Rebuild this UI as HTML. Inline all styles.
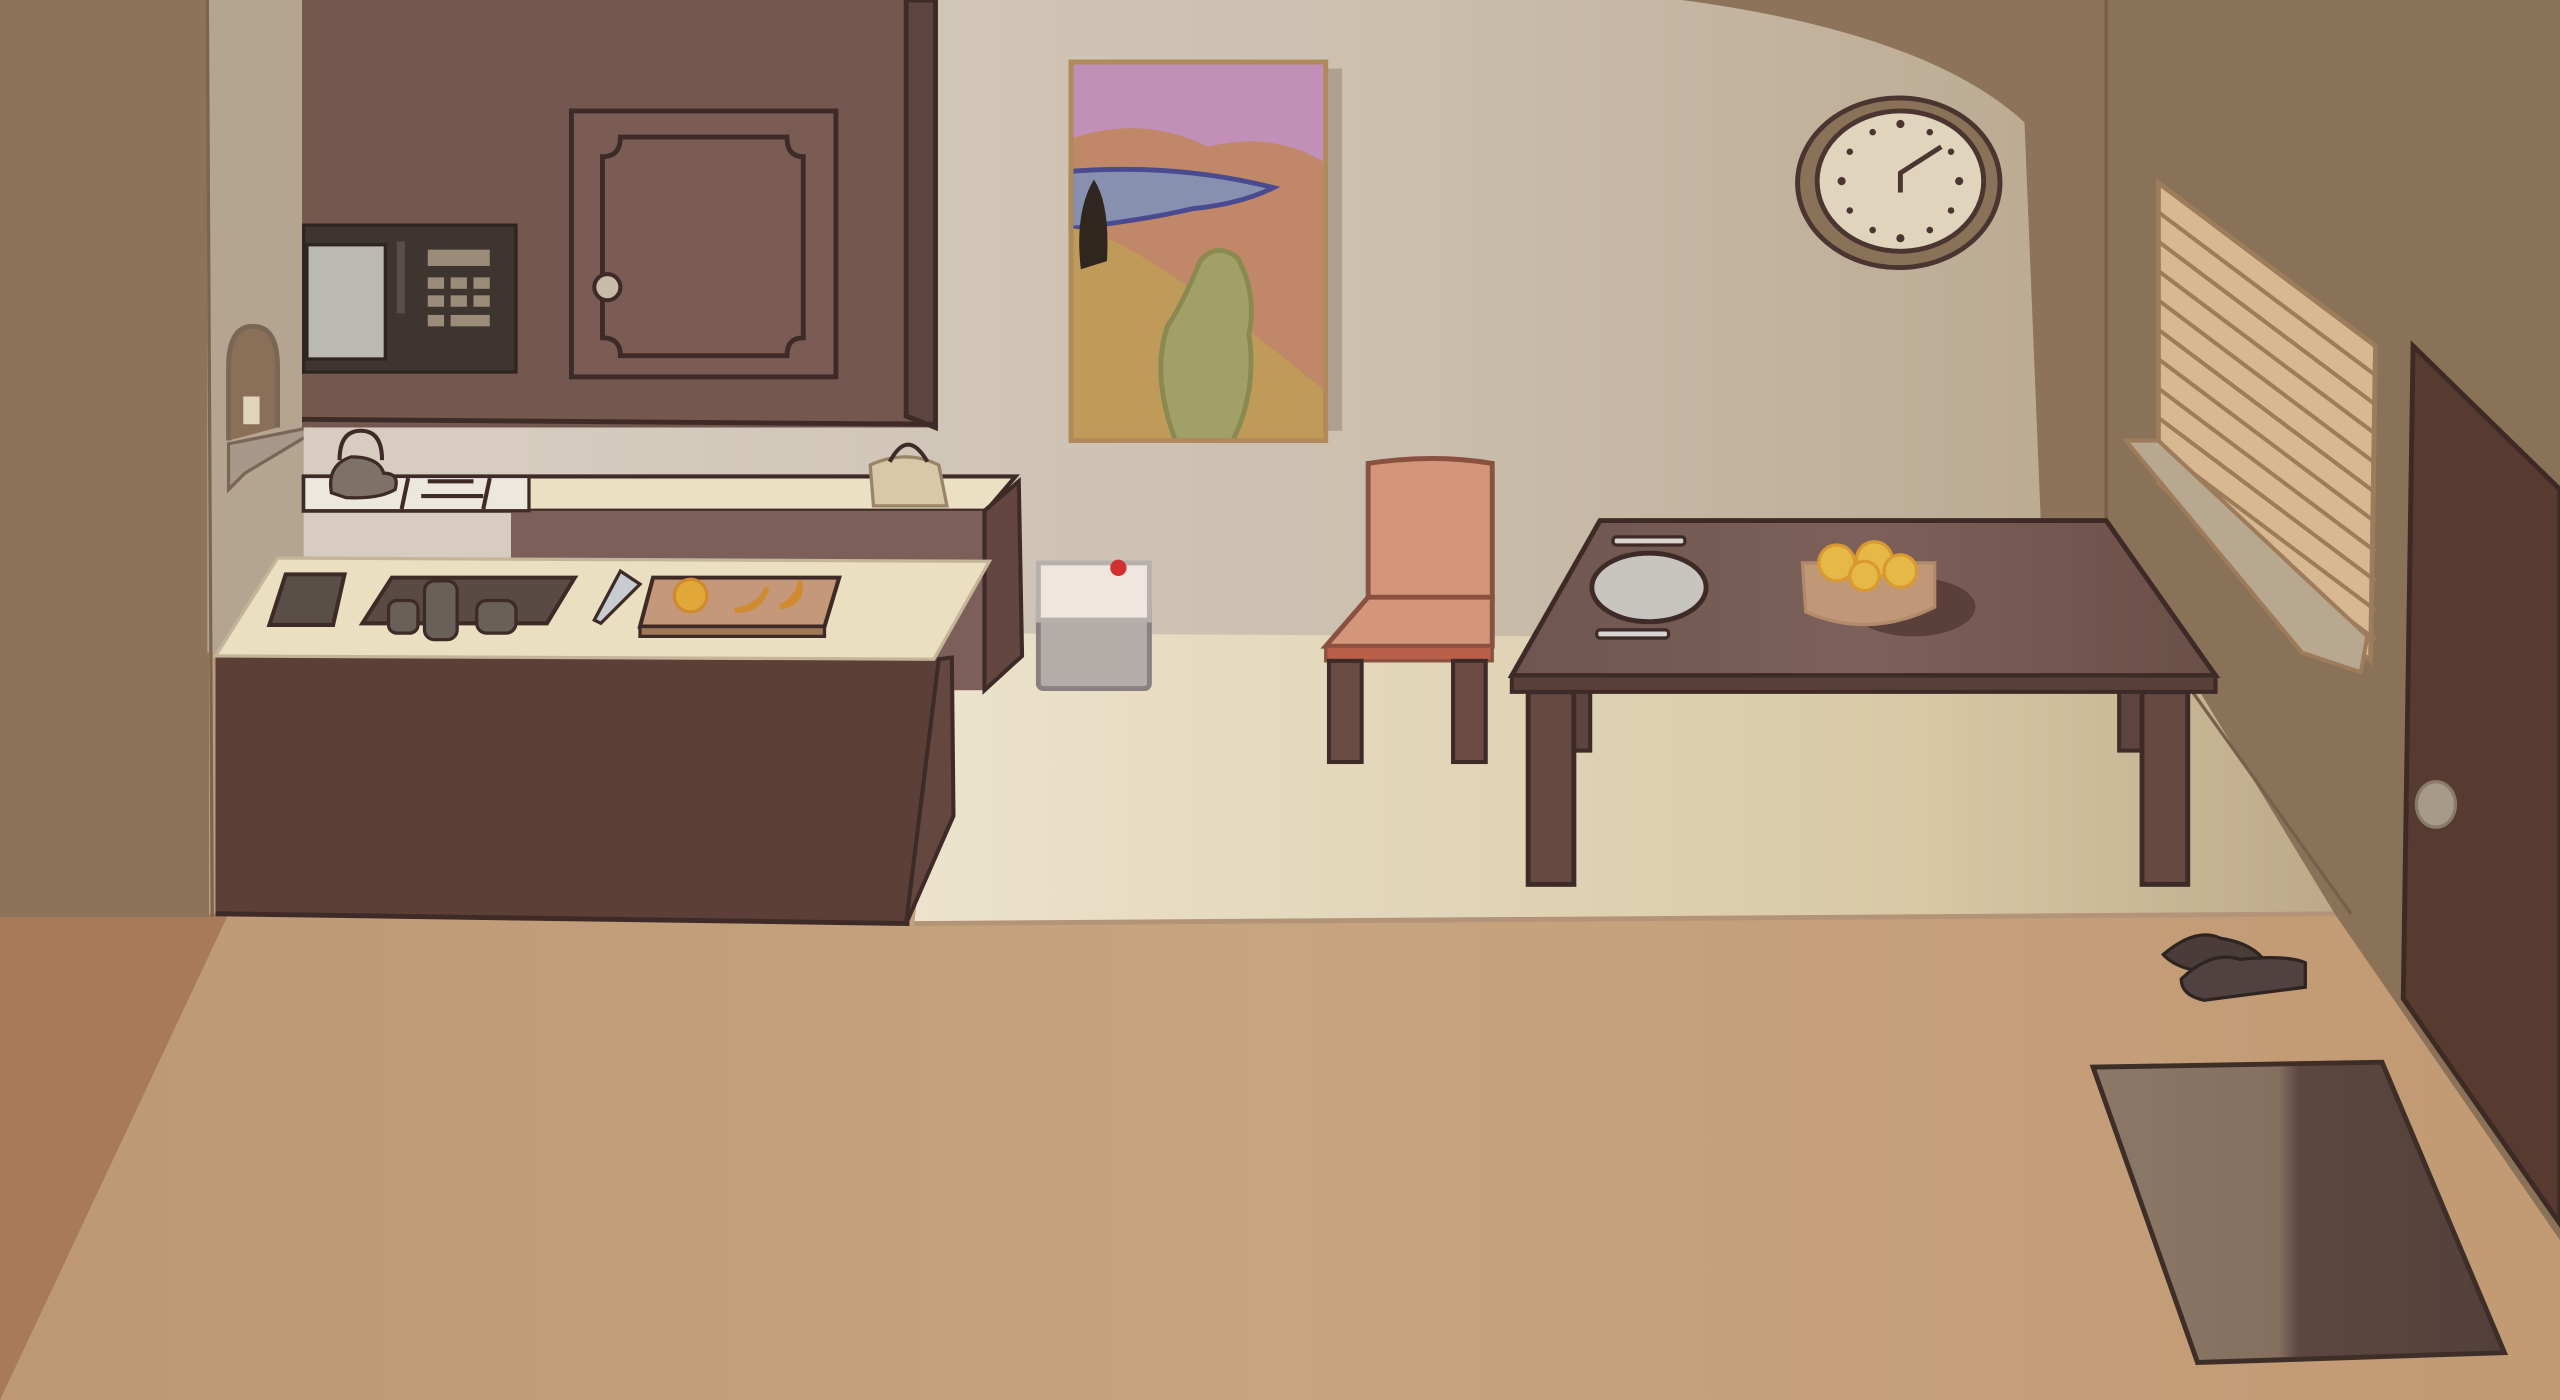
<!DOCTYPE html>
<html><head><meta charset="utf-8"><style>
html,body{margin:0;padding:0;width:2560px;height:1400px;overflow:hidden;background:#c4a07c}
svg{display:block}
</style></head><body>
<svg width="2560" height="1400" viewBox="0 0 1568 858" preserveAspectRatio="none" xmlns="http://www.w3.org/2000/svg">
<defs>
<linearGradient id="bw" x1="0" y1="0" x2="1" y2="0"><stop offset="0" stop-color="#d8cfc3"/><stop offset="0.6" stop-color="#cbbfae"/><stop offset="1" stop-color="#bba990"/></linearGradient>
<linearGradient id="fl" x1="0" y1="0" x2="1" y2="0"><stop offset="0" stop-color="#bc9873"/><stop offset="0.5" stop-color="#c7a57f"/><stop offset="1" stop-color="#c29a74"/></linearGradient>
<linearGradient id="bf" x1="0" y1="0" x2="1" y2="0"><stop offset="0" stop-color="#ece3cc"/><stop offset="0.7" stop-color="#d8c8a6"/><stop offset="1" stop-color="#bca888"/></linearGradient>
<linearGradient id="tb" x1="0" y1="0" x2="1" y2="0"><stop offset="0" stop-color="#6f5650"/><stop offset="0.5" stop-color="#7d605a"/><stop offset="1" stop-color="#6a4f47"/></linearGradient>
<linearGradient id="mat" x1="0" y1="0" x2="1" y2="0"><stop offset="0" stop-color="#8c7868"/><stop offset="0.45" stop-color="#857060"/><stop offset="0.5" stop-color="#5c4640"/><stop offset="1" stop-color="#54403a"/></linearGradient>
</defs>
<rect x="0" y="0" width="1568" height="858" fill="url(#fl)"/>
<polygon points="0,560 140,560 0,858" fill="#a87a58"/>
<polygon points="1430,560 1568,560 1568,760" fill="#9c7050"/>
<rect x="185" y="0" width="1110" height="392" fill="url(#bw)"/>
<path d="M1030,0 Q1180,20 1240,75 L1250,320 L1295,320 L1295,0 Z" fill="#8c7359"/>
<polygon points="580,388 1300,392 1345,420 1440,560 560,566" fill="url(#bf)"/>
<line x1="560" y1="566" x2="1440" y2="560" stroke="#b49478" stroke-width="3"/>
<rect x="0" y="0" width="128" height="562" fill="#8c735a"/>
<rect x="127" y="0" width="60" height="400" fill="#b4a490"/>
<line x1="127" y1="0" x2="130" y2="562" stroke="#7a6650" stroke-width="2"/>
<polygon points="1290,0 1568,0 1568,760 1430,560 1345,420 1290,392" fill="#8a7258"/>
<line x1="1290" y1="0" x2="1290" y2="392" stroke="#76604a" stroke-width="2"/>
<line x1="1340" y1="420" x2="1440" y2="560" stroke="#76604a" stroke-width="2"/>
<polygon points="1478,212 1568,300 1568,750 1472,612" fill="#573a30" stroke="#3e2a24" stroke-width="3"/>
<ellipse cx="1492" cy="493" rx="12" ry="14" fill="#a89a88" stroke="#8a7a68" stroke-width="2"/>
<polygon points="1322,112 1455,212 1452,405 1322,296" fill="#d8b890" stroke="#9c7c5a" stroke-width="3"/>
<g stroke="#9c7c5a" stroke-width="2.5">
<line x1="1322" y1="130" x2="1455" y2="230"/><line x1="1322" y1="148" x2="1455" y2="248"/><line x1="1322" y1="166" x2="1455" y2="266"/><line x1="1322" y1="184" x2="1455" y2="284"/><line x1="1322" y1="202" x2="1455" y2="302"/><line x1="1322" y1="220" x2="1455" y2="320"/><line x1="1322" y1="238" x2="1455" y2="338"/><line x1="1322" y1="256" x2="1455" y2="356"/><line x1="1322" y1="274" x2="1455" y2="374"/><line x1="1322" y1="292" x2="1455" y2="392"/>
</g>
<polygon points="1302,270 1322,270 1450,390 1446,412 1410,400" fill="#b8a890" stroke="#9c7c5a" stroke-width="2.5"/>
<ellipse cx="1163" cy="112" rx="62" ry="52" fill="#8a7258" stroke="#4a3530" stroke-width="3"/>
<ellipse cx="1164" cy="111" rx="51" ry="43" fill="#e0d4bc" stroke="#4a3530" stroke-width="3"/>
<g fill="#4a3530"><circle cx="1164" cy="76" r="2.5"/><circle cx="1164" cy="146" r="2.5"/><circle cx="1200" cy="111" r="2.5"/><circle cx="1128" cy="111" r="2.5"/><circle cx="1147" cy="81" r="2"/><circle cx="1182" cy="81" r="2"/><circle cx="1195" cy="93" r="2"/><circle cx="1195" cy="129" r="2"/><circle cx="1182" cy="141" r="2"/><circle cx="1147" cy="141" r="2"/><circle cx="1133" cy="129" r="2"/><circle cx="1133" cy="93" r="2"/></g>
<path d="M1164,118 L1164,106 L1189,90" fill="none" stroke="#4a3530" stroke-width="3"/>
<rect x="812" y="42" width="10" height="222" fill="#b0a090"/>
<rect x="656" y="38" width="156" height="232" fill="#b88d9c"/>
<path d="M656,38 H812 V100 Q780,80 740,90 Q700,70 656,85Z" fill="#c090b8"/>
<path d="M656,85 Q700,70 740,90 Q780,80 812,100 V270 H656Z" fill="#c08868"/>
<path d="M656,105 Q720,100 780,115 Q760,125 730,128 Q700,135 656,140Z" fill="#8890b0" stroke="#4a4a90" stroke-width="3"/>
<path d="M656,140 Q690,140 812,240 V270 H656Z" fill="#c09a58"/>
<path d="M720,270 Q705,230 715,200 Q725,185 735,160 Q745,148 758,158 Q770,180 765,205 Q770,240 755,270Z" fill="#a0a068" stroke="#8a8a50" stroke-width="3"/>
<path d="M662,165 Q658,130 670,110 Q680,125 678,160Z" fill="#302620"/>
<rect x="656" y="38" width="156" height="232" fill="none" stroke="#b08a5a" stroke-width="3"/>
<rect x="185" y="0" width="388" height="262" fill="#74574f"/>
<polygon points="555,0 573,0 573,262 555,255" fill="#5e4440" stroke="#3e2a26" stroke-width="3"/>
<line x1="185" y1="257" x2="573" y2="260" stroke="#3e2a26" stroke-width="3"/>
<rect x="350" y="68" width="162" height="163" fill="#7a5c55" stroke="#3e2a26" stroke-width="3"/>
<path d="M380,84 H482 Q482,96 492,96 V207 Q482,207 482,218 H380 Q380,207 369,207 V96 Q380,96 380,84Z" fill="none" stroke="#3e2a26" stroke-width="3"/>
<circle cx="372" cy="176" r="8" fill="#c8bca8" stroke="#3e2a26" stroke-width="2.5"/>
<rect x="186" y="138" width="130" height="90" fill="#3e3530" stroke="#2e2420" stroke-width="2"/>
<rect x="188" y="150" width="48" height="70" fill="#bcb8b4" stroke="#2e2420" stroke-width="2"/>
<rect x="262" y="153" width="38" height="10" fill="#9a8c78"/>
<g fill="#9a8c78"><rect x="262" y="170" width="10" height="7"/><rect x="276" y="170" width="10" height="7"/><rect x="290" y="170" width="10" height="7"/><rect x="262" y="181" width="10" height="7"/><rect x="276" y="181" width="10" height="7"/><rect x="290" y="181" width="10" height="7"/><rect x="262" y="193" width="10" height="7"/><rect x="276" y="193" width="24" height="7"/></g>
<rect x="243" y="148" width="5" height="44" fill="#5a4e48"/>
<path d="M140,270 V225 Q140,200 155,200 Q170,200 170,225 V262" fill="#8a7058" stroke="#7a6655" stroke-width="3"/>
<polygon points="140,272 190,262 190,266 150,290 140,300" fill="#a8988a" stroke="#7a6655" stroke-width="2"/>
<rect x="149" y="243" width="10" height="17" fill="#e0d4bc"/>
<rect x="186" y="262" width="138" height="80" fill="#d8ccc0"/>
<polygon points="186,292 622,292 604,313 186,313" fill="#ece0c4" stroke="#3e2a26" stroke-width="2.5"/>
<rect x="313" y="313" width="290" height="110" fill="#7c5f58"/>
<polygon points="603,313 624,295 626,402 603,423" fill="#62463f" stroke="#3e2a26" stroke-width="2.5"/>
<rect x="186" y="292" width="138" height="21" fill="#ece8e0" stroke="#3e2a26" stroke-width="2"/>
<path d="M250,293 L246,312 M262,295 H290 M258,304 H296 M300,293 L296,312" stroke="#3e2a26" stroke-width="2.5" fill="none"/>
<path d="M203,302 Q200,285 215,280 Q232,280 235,290 Q245,290 242,300 Q232,306 212,305Z" fill="#7e7268" stroke="#3e2a26" stroke-width="2"/>
<path d="M208,282 Q208,264 221,264 Q234,264 234,282" fill="none" stroke="#3e2a26" stroke-width="2.5"/>
<path d="M533,285 Q555,275 575,285 L580,310 H535Z" fill="#d8c8a8" stroke="#9a8468" stroke-width="2"/>
<path d="M545,283 Q556,262 568,283" fill="none" stroke="#3e2a26" stroke-width="2.5"/>
<polygon points="132,400 575,404 555,566 132,560" fill="#5c3f36"/>
<polygon points="575,404 583,403 584,500 555,566" fill="#644840" stroke="#3e2a26" stroke-width="2.5"/>
<line x1="132" y1="560" x2="557" y2="566" stroke="#3e2a26" stroke-width="3"/>
<polygon points="170,342 606,344 572,404 132,402" fill="#ebdfc2" stroke="#c4b49a" stroke-width="2"/>
<polygon points="175,352 211,352 204,383 165,383" fill="#5a4e48" stroke="#3e2a26" stroke-width="2.5"/>
<polygon points="240,354 352,354 335,382 222,382" fill="#5a4a44" stroke="#3e2a26" stroke-width="2.5"/>
<rect x="238" y="368" width="18" height="20" rx="5" fill="#6a605a" stroke="#3e2a26" stroke-width="2"/>
<rect x="292" y="368" width="24" height="20" rx="6" fill="#6a605a" stroke="#3e2a26" stroke-width="2"/>
<rect x="260" y="356" width="20" height="36" rx="6" fill="#6a605a" stroke="#3e2a26" stroke-width="2"/>
<path d="M380,350 L392,358 L368,382 L364,380Z" fill="#c8ccd0" stroke="#3e2a26" stroke-width="2"/>
<polygon points="400,354 514,354 505,384 392,384" fill="#c49878" stroke="#3e2a26" stroke-width="2.5"/>
<rect x="392" y="384" width="113" height="6" fill="#a07858" stroke="#3e2a26" stroke-width="2"/>
<circle cx="423" cy="365" r="10" fill="#e0a838" stroke="#d08a30" stroke-width="2"/>
<path d="M450,374 Q465,372 470,360 Q465,375 450,374Z M478,372 Q490,365 490,356 Q492,370 478,372Z" fill="#e0a838" stroke="#d08a30" stroke-width="3"/>
<rect x="636" y="368" width="68" height="54" rx="3" fill="#b4aca8" stroke="#8a8080" stroke-width="3"/>
<path d="M636,345 H704 V380 H636Z" fill="#f0e6e0" stroke="#b8b0ac" stroke-width="3"/>
<circle cx="685" cy="348" r="5" fill="#d03030"/>
<path d="M838,284 Q878,278 914,284 V368 H838Z" fill="#d4967a" stroke="#8a5040" stroke-width="3"/>
<polygon points="838,366 914,366 914,396 812,396" fill="#d4967a" stroke="#8a5040" stroke-width="3"/>
<rect x="812" y="396" width="102" height="9" fill="#b86048" stroke="#8a5040" stroke-width="2"/>
<rect x="814" y="405" width="20" height="62" fill="#6a4c44" stroke="#3e2a26" stroke-width="2.5"/>
<rect x="890" y="405" width="20" height="62" fill="#6a4c44" stroke="#3e2a26" stroke-width="2.5"/>
<rect x="960" y="420" width="14" height="40" fill="#5e4440" stroke="#3e2a26" stroke-width="2.5"/>
<rect x="1298" y="420" width="14" height="40" fill="#5e4440" stroke="#3e2a26" stroke-width="2.5"/>
<rect x="936" y="424" width="28" height="118" fill="#664a42" stroke="#3e2a26" stroke-width="3"/>
<rect x="1312" y="424" width="28" height="118" fill="#664a42" stroke="#3e2a26" stroke-width="3"/>
<polygon points="980,319 1290,319 1357,414 926,414" fill="url(#tb)" stroke="#3e2a26" stroke-width="3"/>
<rect x="926" y="414" width="431" height="10" fill="#5a4039" stroke="#3e2a26" stroke-width="2.5"/>
<ellipse cx="1010" cy="360" rx="35" ry="21" fill="#c8c4c0" stroke="#3e2a26" stroke-width="3"/>
<rect x="988" y="329" width="44" height="5" rx="2" fill="#d8d4d0" stroke="#3e2a26" stroke-width="2"/>
<rect x="978" y="386" width="44" height="5" rx="2" fill="#d8d4d0" stroke="#3e2a26" stroke-width="2"/>
<ellipse cx="1172" cy="372" rx="38" ry="18" fill="#5a4039"/>
<path d="M1104,345 H1185 V372 Q1145,392 1106,375Z" fill="#c09878" stroke="#b08a6a" stroke-width="2"/>
<g fill="#e6b848" stroke="#d89a30" stroke-width="2"><circle cx="1125" cy="345" r="11"/><circle cx="1148" cy="343" r="11"/><circle cx="1164" cy="350" r="10"/><circle cx="1142" cy="353" r="9"/></g>
<path d="M1325,585 Q1345,568 1360,575 Q1380,578 1388,590 L1360,596 Q1335,596 1325,585Z" fill="#4a3c38" stroke="#2e2420" stroke-width="2"/>
<path d="M1336,600 Q1355,582 1372,588 Q1400,585 1412,590 V605 L1350,613 Q1336,610 1336,600Z" fill="#504240" stroke="#2e2420" stroke-width="2"/>
<polygon points="1282,654 1459,651 1534,829 1346,835" fill="url(#mat)" stroke="#3e2e28" stroke-width="3"/>
</svg>
</body></html>
